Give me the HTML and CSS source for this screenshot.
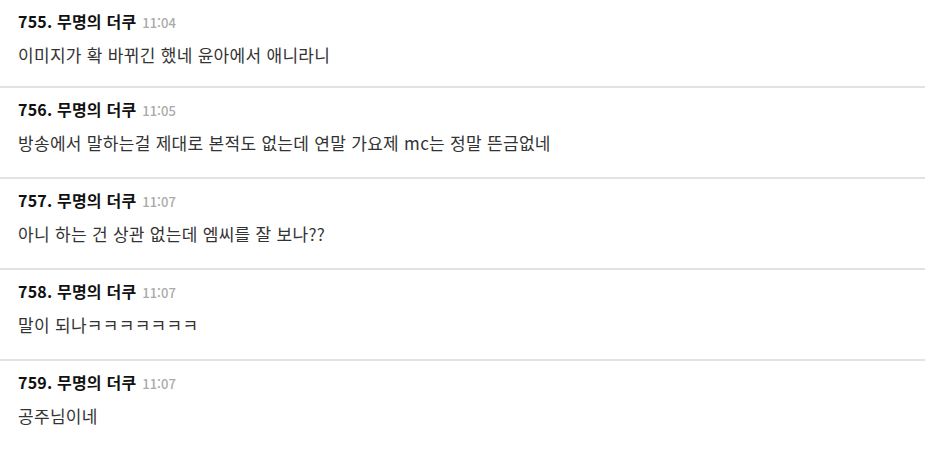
FILE: index.html
```html
<!DOCTYPE html>
<html lang="ko">
<head>
<meta charset="utf-8">
<link rel="stylesheet" href="styles.css">
</head>
<body>
<ul class="list">
  <li class="item">
    <div class="head"><span class="name">755. 무명의 더쿠</span><span class="time">11:04</span></div>
    <div class="body">이미지가 확 바뀌긴 했네 윤아에서 애니라니</div>
  </li>
  <li class="item">
    <div class="head"><span class="name">756. 무명의 더쿠</span><span class="time">11:05</span></div>
    <div class="body">방송에서 말하는걸 제대로 본적도 없는데 연말 가요제 mc는 정말 뜬금없네</div>
  </li>
  <li class="item">
    <div class="head"><span class="name">757. 무명의 더쿠</span><span class="time">11:07</span></div>
    <div class="body">아니 하는 건 상관 없는데 엠씨를 잘 보나??</div>
  </li>
  <li class="item">
    <div class="head"><span class="name">758. 무명의 더쿠</span><span class="time">11:07</span></div>
    <div class="body">말이 되나ㅋㅋㅋㅋㅋㅋㅋ</div>
  </li>
  <li class="item">
    <div class="head"><span class="name">759. 무명의 더쿠</span><span class="time">11:07</span></div>
    <div class="body">공주님이네</div>
  </li>
</ul>
</body>
</html>
```
FILE: styles.css
```css
html, body {
  margin: 0;
  padding: 0;
  background: #fff;
}
body {
  font-family: "Noto Sans CJK KR", "Noto Sans", sans-serif;
  color: #333;
}
.list {
  list-style: none;
  margin: 0;
  padding: 0;
}
.item {
  height: 88px;
  padding: 10px 18px 0;
  box-sizing: border-box;
  border-bottom: 2px solid #e2e2e2;
  display: flex;
  flex-direction: column;
  gap: 8px;
}
.item + .item {
  height: 91px;
}
.item:last-child {
  border-bottom: none;
}
.head {
  display: flex;
  align-items: baseline;
  gap: 6px;
  line-height: 22px;
}
.name {
  font-size: 16px;
  font-weight: 700;
  color: #111;
  letter-spacing: 0.2px;
}
.time {
  font-size: 13px;
  font-weight: 500;
  color: #aaa;
}
.body {
  font-size: 17px;
  line-height: 26px;
  letter-spacing: 0.3px;
  color: #333;
}
```
